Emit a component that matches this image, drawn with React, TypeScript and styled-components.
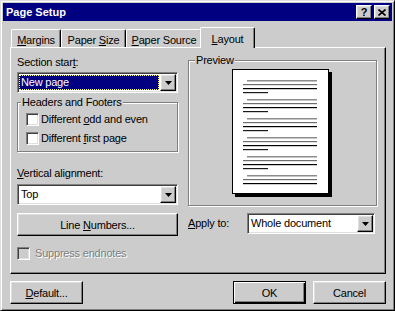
import React from "react";
import styled, { createGlobalStyle, css } from "styled-components";

const GlobalStyle = createGlobalStyle`
  html, body {
    margin: 0;
    padding: 0;
    background: #cccccc;
  }
  body {
    font-family: "Liberation Sans", Arial, sans-serif;
    font-size: 11px;
    line-height: 13px;
    letter-spacing: -0.2px;
    color: #000;
  }
`;

const raised = css`
  border: 1px solid;
  border-color: #fff #000 #000 #fff;
  box-shadow: inset -1px -1px 0 #808080, inset 1px 1px 0 #dfdfdf;
`;

const sunken = css`
  border: 1px solid;
  border-color: #808080 #fff #fff #808080;
  box-shadow: inset 1px 1px 0 #404040, inset -1px -1px 0 #dfdfdf;
`;

const Window = styled.div`
  box-sizing: border-box;
  width: 395px;
  height: 311px;
  background: #cccccc;
  border: 1px solid;
  border-color: #dfdfdf #000 #000 #dfdfdf;
  box-shadow: inset 1px 1px 0 #fff, inset -1px -1px 0 #808080;
  padding: 2px;
  display: flex;
  flex-direction: column;
`;

const TitleBar = styled.div`
  height: 18px;
  flex: none;
  background: #000080;
  color: #fff;
  display: flex;
  align-items: center;
  padding: 0 2px 0 3px;
`;

const Title = styled.div`
  flex: 1;
  font-weight: bold;
  font-size: 11px;
  letter-spacing: 0;
`;

const TitleButton = styled.div<{ $gap?: number }>`
  box-sizing: border-box;
  width: 16px;
  height: 14px;
  margin-left: ${(p) => p.$gap || 0}px;
  background: #cccccc;
  ${raised};
  display: flex;
  align-items: center;
  justify-content: center;
  color: #000;
  font-weight: bold;
  font-size: 11px;
  line-height: 12px;
`;

const Body = styled.div`
  flex: 1;
  display: flex;
  flex-direction: column;
  padding: 6px 6px 0 7px;
`;

const TabRow = styled.div`
  display: flex;
  align-items: flex-end;
  height: 20px;
  padding-left: 1px;
`;

const Tab = styled.div<{ $w: number; $active?: boolean }>`
  box-sizing: border-box;
  position: relative;
  width: ${(p) => p.$w}px;
  height: 18px;
  padding-top: 4px;
  text-align: center;
  background: #cccccc;
  border-top: 1px solid #fff;
  border-left: 1px solid #fff;
  border-right: 1px solid #000;
  border-radius: 2px 2px 0 0;
  box-shadow: inset -1px 0 0 #808080;
  ${(p) =>
    p.$active &&
    css`
      z-index: 1;
      width: ${p.$w + 4}px;
      height: 21px;
      margin: 0 -2px -1px;
      padding-top: 5px;
    `}
`;

const Key = styled.span`
  text-decoration: underline;
`;

const Panel = styled.div`
  box-sizing: border-box;
  height: 227px;
  ${raised};
  box-shadow: inset -1px -1px 0 #808080;
  display: grid;
  grid-template-columns: 161px 189px;
  column-gap: 10px;
  align-items: start;
  padding: 6px 0 0 6px;
`;

const Column = styled.div`
  display: flex;
  flex-direction: column;
`;

const Label = styled.div<{ $mt?: number; $disabled?: boolean }>`
  margin-top: ${(p) => p.$mt || 0}px;
  white-space: nowrap;
  ${(p) =>
    p.$disabled &&
    css`
      color: #808080;
      text-shadow: 1px 1px 0 #fff;
    `}
`;

const Combo = styled.div<{ $w: number; $mt?: number }>`
  box-sizing: border-box;
  width: ${(p) => p.$w}px;
  height: 21px;
  margin-top: ${(p) => p.$mt || 0}px;
  background: #fff;
  ${sunken};
  padding: 1px;
  display: flex;
  flex: none;
`;

const ComboValue = styled.div<{ $selected?: boolean }>`
  flex: 1;
  padding-left: 2px;
  line-height: 17px;
  white-space: nowrap;
  ${(p) =>
    p.$selected &&
    css`
      margin: 1px 1px 1px 0;
      padding-left: 2px;
      line-height: 15px;
      background: #000080;
      color: #fff;
      outline: 1px dotted #ffff80;
      outline-offset: -1px;
    `}
`;

const DropButton = styled.div`
  box-sizing: border-box;
  width: 16px;
  height: 17px;
  background: #cccccc;
  ${raised};
  display: flex;
  align-items: center;
  justify-content: center;
`;

const Group = styled.fieldset<{ $h: number; $mt?: number }>`
  box-sizing: border-box;
  margin: ${(p) => p.$mt || 0}px 0 0;
  min-width: 0;
  height: ${(p) => p.$h}px;
  padding: 0;
  border: 1px solid #808080;
  box-shadow: 1px 1px 0 #fff, inset 1px 1px 0 #fff;
`;

const Legend = styled.legend<{ $x: number }>`
  margin-left: ${(p) => p.$x}px;
  padding: 0 1px;
  line-height: 13px;
  background: #cccccc;
`;

const CheckList = styled.div`
  display: flex;
  flex-direction: column;
  gap: 6px;
  padding: 4px 0 0 8px;
`;

const CheckRow = styled.div<{ $mt?: number; $gap?: number }>`
  display: flex;
  align-items: center;
  gap: ${(p) => p.$gap || 2}px;
  margin-top: ${(p) => p.$mt || 0}px;
`;

const Box = styled.div<{ $disabled?: boolean }>`
  box-sizing: border-box;
  width: 13px;
  height: 13px;
  flex: none;
  background: ${(p) => (p.$disabled ? "#cccccc" : "#fff")};
  ${sunken};
`;

const Button = styled.button<{ $w: number; $mt?: number; $default?: boolean }>`
  box-sizing: border-box;
  width: ${(p) => p.$w}px;
  height: 23px;
  margin-top: ${(p) => p.$mt || 0}px;
  padding: 0;
  background: #cccccc;
  font-family: "Liberation Sans", Arial, sans-serif;
  font-size: 11px;
  letter-spacing: -0.2px;
  color: #000;
  ${raised};
  ${(p) =>
    p.$default &&
    css`
      border: 1px solid #000;
      box-shadow: inset 1px 1px 0 #fff, inset -1px -1px 0 #000,
        inset -2px -2px 0 #808080;
    `}
`;

const PageSvg = styled.svg`
  display: block;
  margin: 2px auto 0;
  padding-right: 2px;
`;

const ApplyRow = styled.div`
  display: flex;
  align-items: center;
  margin-top: 7px;
`;

const ApplyLabel = styled.div`
  width: 59px;
`;

const Footer = styled.div`
  display: flex;
  align-items: center;
  gap: 7px;
  margin-top: 7px;
`;

const Spacer = styled.div`
  flex: 1;
`;

const Arrow = () => (
  <svg width="7" height="4" viewBox="0 0 7 4">
    <path d="M0 0h7L3.5 4z" fill="#000" />
  </svg>
);

const CloseGlyph = () => (
  <svg width="8" height="7" viewBox="0 0 8 7">
    <path d="M0.5 0.5L7.5 6.5M7.5 0.5L0.5 6.5" stroke="#000" strokeWidth="1.6" />
  </svg>
);

const PagePreview = () => {
  const groups = [0, 1, 2, 3, 4, 5];
  return (
    <PageSvg width={100} height={128} viewBox="0 0 100 128">
      <rect x={3} y={3} width={97} height={125} fill="#000" />
      <rect x={0.5} y={0.5} width={96} height={124} fill="#fff" stroke="#000" />
      {groups.map((g) => {
        const y = 11 + g * 19;
        return (
          <g key={g}>
            <rect x={15} y={y} width={70} height={1.5} fill="#8c8c8c" />
            <rect x={11} y={y + 4} width={74} height={1.2} fill="#6e6e6e" />
            <rect x={11} y={y + 8} width={74} height={1.2} fill="#000" />
            {g < 5 && <rect x={11} y={y + 12} width={25} height={1.2} fill="#1a1a1a" />}
          </g>
        );
      })}
    </PageSvg>
  );
};

export default function App() {
  return (
    <>
      <GlobalStyle />
      <Window>
        <TitleBar>
          <Title>Page Setup</Title>
          <TitleButton>?</TitleButton>
          <TitleButton $gap={2}>
            <CloseGlyph />
          </TitleButton>
        </TitleBar>
        <Body>
          <TabRow>
            <Tab $w={50}>
              <Key>M</Key>argins
            </Tab>
            <Tab $w={65}>
              Paper <Key>S</Key>ize
            </Tab>
            <Tab $w={76}>
              <Key>P</Key>aper Source
            </Tab>
            <Tab $w={51} $active>
              <Key>L</Key>ayout
            </Tab>
          </TabRow>
          <Panel>
            <Column>
              <Label $mt={2}>
                Section star<Key>t</Key>:
              </Label>
              <Combo $w={161} $mt={3}>
                <ComboValue $selected>New page</ComboValue>
                <DropButton>
                  <Arrow />
                </DropButton>
              </Combo>
              <Group $h={56} $mt={3}>
                <Legend $x={3}>Headers and Footers</Legend>
                <CheckList>
                  <CheckRow>
                    <Box />
                    <span>
                      Different <Key>o</Key>dd and even
                    </span>
                  </CheckRow>
                  <CheckRow>
                    <Box />
                    <span>
                      Different <Key>f</Key>irst page
                    </span>
                  </CheckRow>
                </CheckList>
              </Group>
              <Label $mt={15}>
                <Key>V</Key>ertical alignment:
              </Label>
              <Combo $w={161} $mt={4}>
                <ComboValue>Top</ComboValue>
                <DropButton>
                  <Arrow />
                </DropButton>
              </Combo>
              <Button $w={161} $mt={8}>
                Line <Key>N</Key>umbers...
              </Button>
              <CheckRow $mt={11} $gap={5}>
                <Box $disabled />
                <Label $disabled>Suppress endnotes</Label>
              </CheckRow>
            </Column>
            <Column>
              <Group $h={152}>
                <Legend $x={6}>Preview</Legend>
                <PagePreview />
              </Group>
              <ApplyRow>
                <ApplyLabel>
                  <Key>A</Key>pply to:
                </ApplyLabel>
                <Combo $w={128}>
                  <ComboValue>Whole document</ComboValue>
                  <DropButton>
                    <Arrow />
                  </DropButton>
                </Combo>
              </ApplyRow>
            </Column>
          </Panel>
          <Footer>
            <Button $w={73}>
              <Key>D</Key>efault...
            </Button>
            <Spacer />
            <Button $w={73} $default>
              OK
            </Button>
            <Button $w={73}>Cancel</Button>
          </Footer>
        </Body>
      </Window>
    </>
  );
}
